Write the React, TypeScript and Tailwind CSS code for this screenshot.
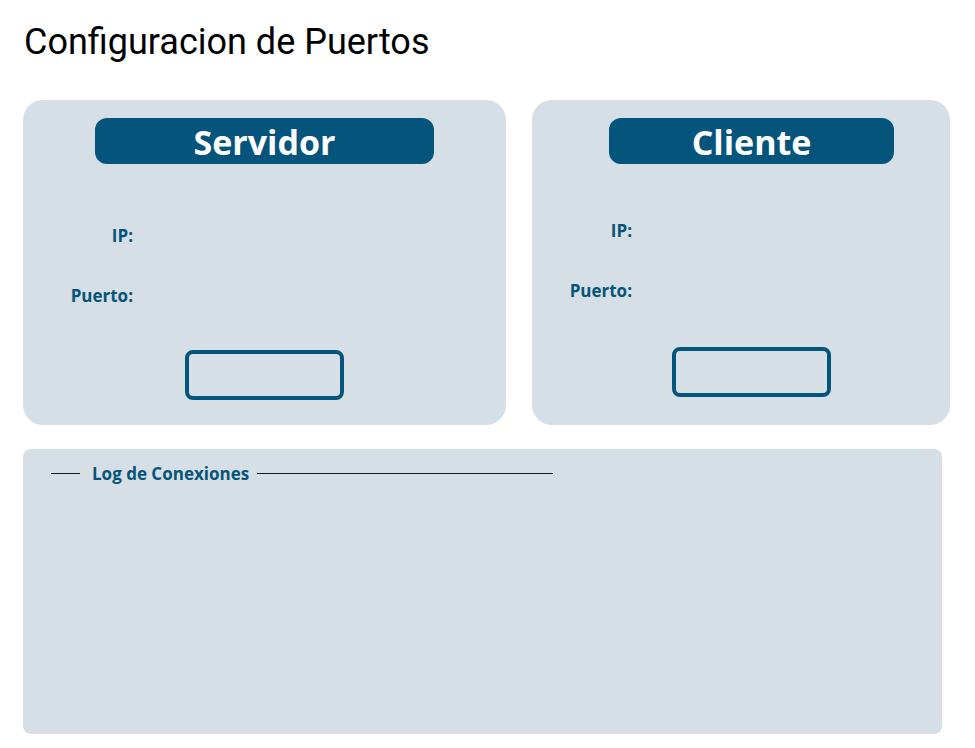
import React from 'react';

interface PanelProps {
  title: string;
  width: string;
  headerClass: string;
  labelWidth: string;
  formTop: string;
  buttonClass: string;
}

const Panel: React.FC<PanelProps> = ({ title, width, headerClass, labelWidth, formTop, buttonClass }) => {
  return (
    <section className={`${width} h-[325px] rounded-[20px] bg-[#d6dfe5] pt-[18px] flex flex-col`}>
      <div
        className={`${headerClass} h-[46px] pt-[2px] rounded-[12px] bg-[#05547b] flex items-center justify-center text-white text-[34px] font-bold font-['Open_Sans',sans-serif]`}
      >
        {title}
      </div>
      <div className={`${formTop} flex flex-col gap-[37px] font-['Open_Sans',sans-serif] text-[17px] font-bold text-[#05547b] leading-[23px]`}>
        <div className="flex">
          <label className={`${labelWidth} text-right`}>IP:</label>
        </div>
        <div className="flex">
          <label className={`${labelWidth} text-right`}>Puerto:</label>
        </div>
      </div>
      <button className={`${buttonClass} w-[159px] h-[50px] rounded-[8px] border-[4px] border-[#05547b] bg-transparent`} />
    </section>
  );
};

const App: React.FC = () => {
  return (
    <div className="min-h-screen bg-white px-[23px] pt-[21px]">
      <h1 className="ml-[1px] font-['Roboto',sans-serif] text-[36px] leading-[42px] font-normal text-black">
        Configuracion de Puertos
      </h1>

      <div className="mt-[37px] flex gap-[26px]">
        <Panel
          title="Servidor"
          width="w-[483px]"
          headerClass="mx-auto w-[339px]"
          labelWidth="w-[110px]"
          formTop="mt-[60px]"
          buttonClass="mt-[43px] ml-[162px]"
        />
        <Panel
          title="Cliente"
          width="w-[418px]"
          headerClass="ml-[77px] w-[285px]"
          labelWidth="w-[100px]"
          formTop="mt-[55px]"
          buttonClass="mt-[45px] ml-[140px]"
        />
      </div>

      <div className="mt-[24px] w-[919px] h-[285px] rounded-[8px] bg-[#d6dfe5] pt-[13px] pl-[28px]">
        <div className="flex items-center font-['Open_Sans',sans-serif] text-[17px] font-bold text-[#05547b] leading-[23px]">
          <span className="w-[29px] h-px bg-[#1a1a1a]" />
          <span className="ml-[12px] mr-[8px]">Log de Conexiones</span>
          <span className="w-[296px] h-px bg-[#1a1a1a]" />
        </div>
      </div>
    </div>
  );
};

export default App;
